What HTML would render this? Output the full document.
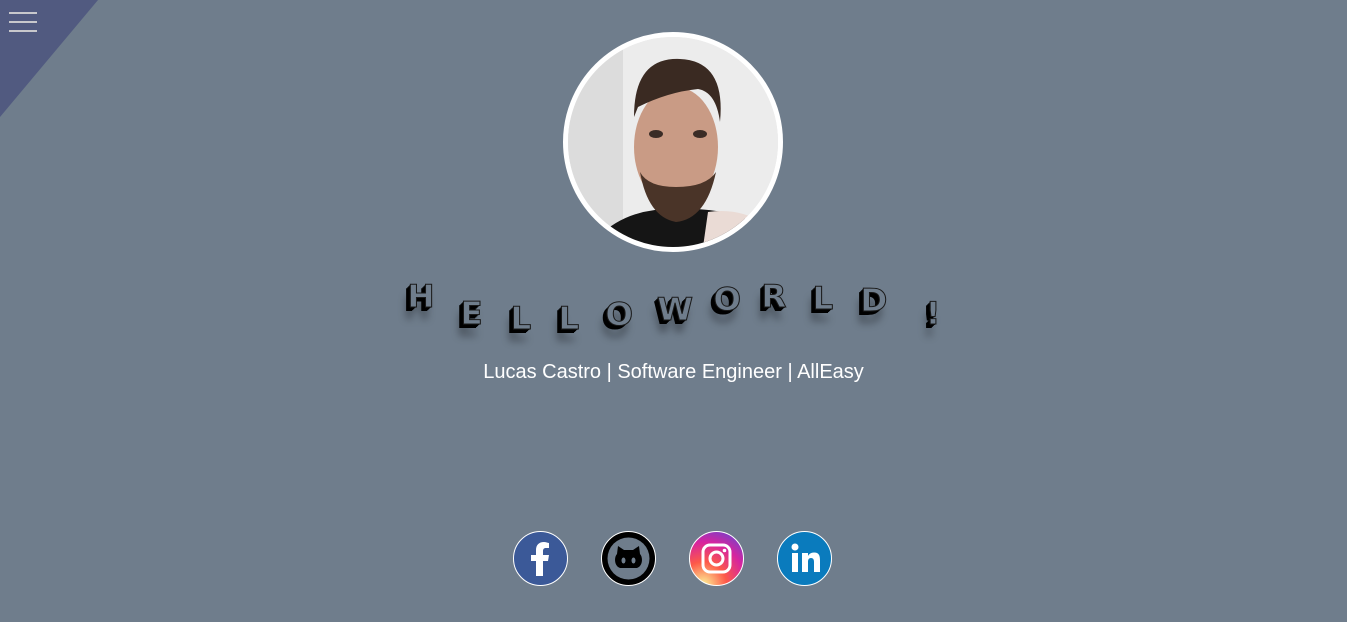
<!DOCTYPE html>
<html><head><meta charset="utf-8"><style>
html,body{margin:0;padding:0;width:1347px;height:622px;overflow:hidden;background:#6f7d8c;font-family:"Liberation Sans",sans-serif;position:relative}
.tri{position:absolute;left:0;top:0;width:0;height:0;border-top:117px solid #515a80;border-right:98px solid transparent}
.hb{position:absolute;left:9px;width:28px;height:2px;background:#c8c8cc}
.photo{position:absolute;left:563px;top:32px;width:210px;height:210px;border:5px solid #fff;border-radius:50%;overflow:hidden;background:#e6e6e6}
.l{position:absolute;font-family:"DejaVu Sans","Liberation Sans",sans-serif;font-weight:bold;font-size:31px;line-height:34px;color:#6f7d8c;-webkit-text-stroke:1px #1a1a1a;text-shadow:-1px 1px 0 #000,-2px 2px 0 #000,-3px 3px 0 #000,-4px 4px 0 #000,-4px 12px 8px rgba(0,0,0,.35);transform:scaleX(1.05)}
.sub{position:absolute;left:0;width:1347px;top:361px;text-align:center;color:#fff;font-size:20px}
.ic{position:absolute;top:531px;width:53px;height:53px;border:1px solid #fff;border-radius:50%;overflow:hidden}
</style></head><body>
<div class="tri"></div>
<div class="hb" style="top:12px"></div><div class="hb" style="top:21px"></div><div class="hb" style="top:30px"></div>
<div class="photo"><svg width="210" height="210" viewBox="0 0 210 210">
<rect width="210" height="210" fill="#ececec"/><rect x="0" y="0" width="55" height="210" fill="#dcdcdc"/>
<path d="M30 200 Q60 170 110 172 Q170 170 200 195 L210 210 L20 210Z" fill="#151515"/>
<path d="M140 175 Q175 170 200 190 L200 210 L135 210Z" fill="#eadbd5"/>
<ellipse cx="108" cy="110" rx="42" ry="60" fill="#c99b85"/>
<path d="M66 80 Q66 20 112 22 Q158 24 152 85 Q148 55 130 52 Q100 55 70 70Z" fill="#3a2a22"/>
<path d="M72 135 Q80 180 108 185 Q138 182 148 135 Q138 150 108 150 Q80 150 72 135Z" fill="#4a3428"/>
<ellipse cx="88" cy="97" rx="7" ry="4" fill="#3a2c26"/><ellipse cx="132" cy="97" rx="7" ry="4" fill="#3a2c26"/>
</svg></div>
<span class="l" style="left:408px;top:280px">H</span>
<span class="l" style="left:461px;top:297px">E</span>
<span class="l" style="left:511px;top:302px">L</span>
<span class="l" style="left:559px;top:302px">L</span>
<span class="l" style="left:606px;top:298px">O</span>
<span class="l" style="left:658px;top:293px">W</span>
<span class="l" style="left:714px;top:283px">O</span>
<span class="l" style="left:762px;top:280px">R</span>
<span class="l" style="left:813px;top:282px">L</span>
<span class="l" style="left:861px;top:284px">D</span>
<span class="l" style="left:926px;top:297px">!</span>
<div class="sub">Lucas Castro | Software Engineer | AllEasy</div>
<div class="ic" style="left:513px;background:#3b5998"><svg width="53" height="53"><path d="M29 44V29h5l1-6h-6v-4c0-2 1-3 3-3h3v-5c-1 0-3-1-5-1-5 0-8 3-8 8v5h-5v6h5v15z" fill="#fff"/></svg></div>
<div class="ic" style="left:601px;background:#000"><svg width="53" height="53"><circle cx="26.5" cy="26.5" r="21" fill="#6f7d8c"/><path d="M15 22l1-8 6 4h9l6-4 1 8c3 3 3 12-3 14H18c-6-2-6-11-3-14z" fill="#000"/><ellipse cx="21.5" cy="28.5" rx="2" ry="3" fill="#6f7d8c"/><ellipse cx="31.5" cy="28.5" rx="2" ry="3" fill="#6f7d8c"/></svg></div>
<div class="ic" style="left:689px;background:radial-gradient(circle at 25% 100%,#fdf497 0%,#fd5949 35%,#d6249f 65%,#285aeb 110%)"><svg width="53" height="53"><rect x="13" y="13" width="27" height="27" rx="7" fill="none" stroke="#fff" stroke-width="3"/><circle cx="26.5" cy="26.5" r="6.5" fill="none" stroke="#fff" stroke-width="3"/><circle cx="34.5" cy="18.5" r="1.8" fill="#fff"/></svg></div>
<div class="ic" style="left:777px;background:#0a7bbd"><svg width="53" height="53"><rect x="14" y="21" width="6" height="19" fill="#fff"/><circle cx="17" cy="15" r="3.5" fill="#fff"/><path d="M24 21h6v3c1-2 3-3.5 6-3.5 5 0 6 3 6 8V40h-6V30c0-2-.5-4-3-4s-3 2-3 4v10h-6z" fill="#fff"/></svg></div>
</body></html>
